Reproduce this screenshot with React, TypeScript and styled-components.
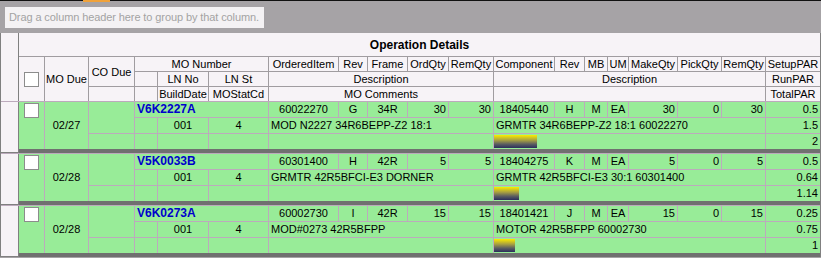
import React from 'react'
import styled, { createGlobalStyle } from 'styled-components'

const GlobalStyle = createGlobalStyle`
    html, body {
        margin: 0;
        padding: 0;
        background: #a6a3a6;
    }
    body {
        font-family: "Liberation Sans", Arial, sans-serif;
        font-size: 11px;
        color: #000;
    }
`

const COLS = '17px 25px 43px 45px 22px 50px 59px 69px 28px 39px 40px 44px 60px 29px 22px 20px 48px 43px 43px 54px'

const Frame = styled.div`
    width: 821px;
`

const TopEdge = styled.div`
    height: 1px;
    background: #111;
    display: flex;
`

const TopTab = styled.span`
    margin-left: 83px;
    width: 27px;
    height: 2px;
    background: #f0a23a;
`

const GroupBar = styled.div`
    height: 32px;
    padding: 6px 0 0 5px;
    box-sizing: border-box;
    background: #a6a3a6;
`

const GroupHint = styled.div`
    width: 259px;
    height: 21px;
    line-height: 21px;
    padding-left: 4px;
    box-sizing: border-box;
    background: #f4f2f4;
    color: #a3a3a3;
    letter-spacing: -0.1px;
`

const HeaderGrid = styled.div`
    display: grid;
    grid-template-columns: ${COLS};
    grid-template-rows: 23px 14px 14px 14px;
    gap: 1px;
    background: #a09ca0;
    border-left: 1px solid #808080;
    border-right: 1px solid #808080;
`

type CellProps = {
    $col: string
    $row?: string
    $align?: 'left' | 'center' | 'right'
    $bold?: boolean
}

const justify = (a?: string) => a === 'left' ? 'flex-start' : a === 'right' ? 'flex-end' : 'center'

const HeadCell = styled.div<CellProps>`
    grid-column: ${p => p.$col};
    grid-row: ${p => p.$row || 'auto'};
    background: #f7f3f7;
    display: flex;
    align-items: center;
    justify-content: ${p => justify(p.$align)};
    padding: 0 2px;
    white-space: nowrap;
    overflow: hidden;
    font-weight: ${p => p.$bold ? 'bold' : 'normal'};
    font-size: ${p => p.$bold ? '12px' : '11px'};
`

const Gutter = styled.div<{ $rows: string }>`
    grid-column: 1;
    grid-row: ${p => p.$rows};
    background: #f7f3f7;
    box-shadow: 1px 0 0 #808080;
`

const Record = styled.div`
    display: grid;
    grid-template-columns: ${COLS};
    grid-template-rows: 15px 15px 15px;
    gap: 1px;
    padding-top: 1px;
    background: #bcaabc;
    border-left: 1px solid #808080;
    border-right: 1px solid #808080;
`

const Cell = styled.div<CellProps>`
    grid-column: ${p => p.$col};
    grid-row: ${p => p.$row || 'auto'};
    background: #98ec98;
    display: flex;
    align-items: center;
    justify-content: ${p => justify(p.$align)};
    padding: 0 2px;
    white-space: nowrap;
    overflow: hidden;
    line-height: 15px;
`

const CheckCell = styled(Cell)`
    align-items: flex-start;
    padding-top: 1px;
`

const Check = styled.span`
    display: block;
    width: 15px;
    height: 15px;
    box-sizing: border-box;
    background: #fff;
    border: 1px solid #8c8c8c;
`

const MoLink = styled.span`
    color: #0000cc;
    font-weight: bold;
    font-size: 12px;
`

const BarCell = styled(Cell)`
    align-items: flex-start;
    justify-content: flex-start;
    padding: 1px 0 0 0;
`

const ColorBar = styled.div`
    height: 13px;
    background: linear-gradient(#fbec00 0%, #a8a040 40%, #5c5f60 70%, #2a2d5c 100%);
`

const Separator = styled.div`
    display: flex;
    height: 4px;
    border-left: 1px solid #808080;
    border-right: 1px solid #808080;
`

const SepGutter = styled.div`
    width: 17px;
    background: #f7f3f7;
    border-right: 1px solid #808080;
    border-bottom: 1px solid #808080;
    box-sizing: content-box;
    height: 3px;
`

const SepBar = styled.div`
    flex: 1;
    background: #707070;
`

type Rec = {
    mo: string
    due: string
    ln: string
    st: string
    item: string
    rev: string
    frame: string
    ord: number
    rem: number
    comp: string
    crev: string
    mb: string
    um: string
    make: number
    pick: number
    crem: number
    setup: string
    run: string
    total: string
    desc: string
    cdesc: string
    bar: number
}

const records: Rec[] = [
    { mo: 'V6K2227A', due: '02/27', ln: '001', st: '4', item: '60022270', rev: 'G', frame: '34R', ord: 30, rem: 30,
      comp: '18405440', crev: 'H', mb: 'M', um: 'EA', make: 30, pick: 0, crem: 30, setup: '0.5', run: '1.5', total: '2',
      desc: 'MOD N2227 34R6BEPP-Z2 18:1', cdesc: 'GRMTR 34R6BEPP-Z2 18:1 60022270', bar: 43 },
    { mo: 'V5K0033B', due: '02/28', ln: '001', st: '4', item: '60301400', rev: 'H', frame: '42R', ord: 5, rem: 5,
      comp: '18404275', crev: 'K', mb: 'M', um: 'EA', make: 5, pick: 0, crem: 5, setup: '0.5', run: '0.64', total: '1.14',
      desc: 'GRMTR 42R5BFCI-E3 DORNER', cdesc: 'GRMTR 42R5BFCI-E3 30:1 60301400', bar: 25 },
    { mo: 'V6K0273A', due: '02/28', ln: '001', st: '4', item: '60002730', rev: 'I', frame: '42R', ord: 15, rem: 15,
      comp: '18401421', crev: 'J', mb: 'M', um: 'EA', make: 15, pick: 0, crem: 15, setup: '0.25', run: '0.75', total: '1',
      desc: 'MOD#0273 42R5BFPP', cdesc: 'MOTOR 42R5BFPP 60002730', bar: 21 },
]

const Header = () => (
    <HeaderGrid>
        <Gutter $rows="1 / 5" />
        <HeadCell $col="2 / 21" $row="1" $bold>Operation Details</HeadCell>

        <HeadCell $col="2" $row="2 / 5"><Check /></HeadCell>
        <HeadCell $col="3" $row="2 / 5">MO Due</HeadCell>
        <HeadCell $col="4" $row="2 / 4">CO Due</HeadCell>
        <HeadCell $col="5 / 8" $row="2">MO Number</HeadCell>
        <HeadCell $col="8" $row="2">OrderedItem</HeadCell>
        <HeadCell $col="9" $row="2">Rev</HeadCell>
        <HeadCell $col="10" $row="2">Frame</HeadCell>
        <HeadCell $col="11" $row="2">OrdQty</HeadCell>
        <HeadCell $col="12" $row="2">RemQty</HeadCell>
        <HeadCell $col="13" $row="2">Component</HeadCell>
        <HeadCell $col="14" $row="2">Rev</HeadCell>
        <HeadCell $col="15" $row="2">MB</HeadCell>
        <HeadCell $col="16" $row="2">UM</HeadCell>
        <HeadCell $col="17" $row="2">MakeQty</HeadCell>
        <HeadCell $col="18" $row="2">PickQty</HeadCell>
        <HeadCell $col="19" $row="2">RemQty</HeadCell>
        <HeadCell $col="20" $row="2">SetupPAR</HeadCell>

        <HeadCell $col="5" $row="3" />
        <HeadCell $col="6" $row="3">LN No</HeadCell>
        <HeadCell $col="7" $row="3">LN St</HeadCell>
        <HeadCell $col="8 / 13" $row="3">Description</HeadCell>
        <HeadCell $col="13 / 20" $row="3">Description</HeadCell>
        <HeadCell $col="20" $row="3">RunPAR</HeadCell>

        <HeadCell $col="4" $row="4" />
        <HeadCell $col="5" $row="4" />
        <HeadCell $col="6" $row="4">BuildDate</HeadCell>
        <HeadCell $col="7" $row="4">MOStatCd</HeadCell>
        <HeadCell $col="8 / 13" $row="4">MO Comments</HeadCell>
        <HeadCell $col="13 / 20" $row="4" />
        <HeadCell $col="20" $row="4">TotalPAR</HeadCell>
    </HeaderGrid>
)

const RecordRow = ({ r }: { r: Rec }) => (
    <>
        <Record>
            <Gutter $rows="1 / 4" />
            <CheckCell $col="2" $row="1 / 4"><Check /></CheckCell>
            <Cell $col="3" $row="1 / 4">{r.due}</Cell>
            <Cell $col="4" $row="1 / 3" />

            <Cell $col="5 / 8" $row="1" $align="left"><MoLink>{r.mo}</MoLink></Cell>
            <Cell $col="8" $row="1">{r.item}</Cell>
            <Cell $col="9" $row="1">{r.rev}</Cell>
            <Cell $col="10" $row="1">{r.frame}</Cell>
            <Cell $col="11" $row="1" $align="right">{r.ord}</Cell>
            <Cell $col="12" $row="1" $align="right">{r.rem}</Cell>
            <Cell $col="13" $row="1">{r.comp}</Cell>
            <Cell $col="14" $row="1">{r.crev}</Cell>
            <Cell $col="15" $row="1">{r.mb}</Cell>
            <Cell $col="16" $row="1">{r.um}</Cell>
            <Cell $col="17" $row="1" $align="right">{r.make}</Cell>
            <Cell $col="18" $row="1" $align="right">{r.pick}</Cell>
            <Cell $col="19" $row="1" $align="right">{r.crem}</Cell>
            <Cell $col="20" $row="1" $align="right">{r.setup}</Cell>

            <Cell $col="5" $row="2" />
            <Cell $col="6" $row="2">{r.ln}</Cell>
            <Cell $col="7" $row="2">{r.st}</Cell>
            <Cell $col="8 / 13" $row="2" $align="left">{r.desc}</Cell>
            <Cell $col="13 / 20" $row="2" $align="left">{r.cdesc}</Cell>
            <Cell $col="20" $row="2" $align="right">{r.run}</Cell>

            <Cell $col="4" $row="3" />
            <Cell $col="5" $row="3" />
            <Cell $col="6" $row="3" />
            <Cell $col="7" $row="3" />
            <Cell $col="8 / 13" $row="3" />
            <BarCell $col="13 / 20" $row="3">
                <ColorBar style={{ width: r.bar }} />
            </BarCell>
            <Cell $col="20" $row="3" $align="right">{r.total}</Cell>
        </Record>
        <Separator>
            <SepGutter />
            <SepBar />
        </Separator>
    </>
)

const App = () => (
    <Frame>
        <GlobalStyle />
        <TopEdge><TopTab /></TopEdge>
        <GroupBar>
            <GroupHint>Drag a column header here to group by that column.</GroupHint>
        </GroupBar>
        <Header />
        {records.map(r => <RecordRow key={r.mo} r={r} />)}
    </Frame>
)

export default App
